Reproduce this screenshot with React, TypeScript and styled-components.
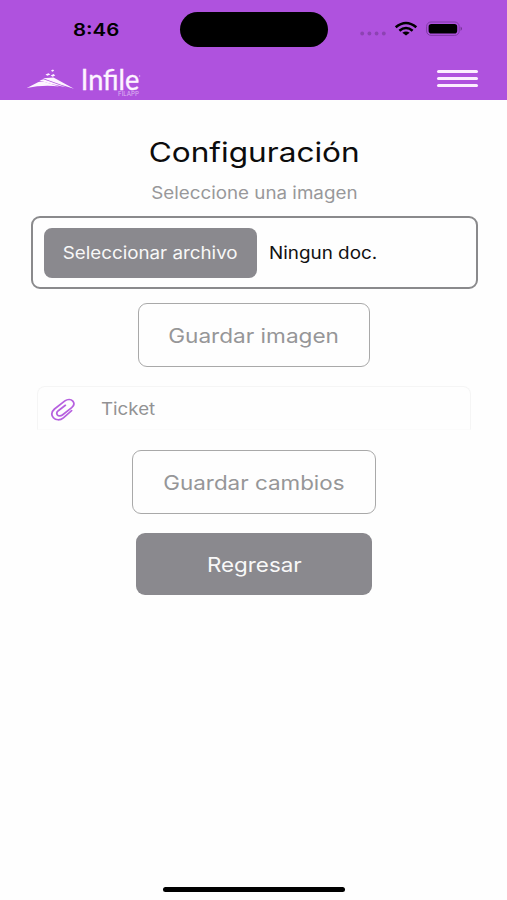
import React from "react";
import styled, { createGlobalStyle } from "styled-components";

const GlobalStyle = createGlobalStyle`
  * { box-sizing: border-box; }
  body {
    margin: 0;
    background: #fefefe;
    font-family: Inter, "Liberation Sans", sans-serif;
  }
  button { font: inherit; }
`;

const Screen = styled.div`
  display: flex;
  flex-direction: column;
  width: 507px;
  height: 900px;
  background: #fefefe;
  overflow: hidden;
`;

const Header = styled.header`
  height: 100px;
  background: #af52de;
`;

const StatusBar = styled.div`
  display: grid;
  grid-template-columns: 180px 148px 1fr;
  height: 59px;
  padding-top: 12px;
`;

const Island = styled.div`
  height: 35px;
  border-radius: 18px;
  background: #000;
`;

const Clock = styled.div`
  padding: 1px 0 0 73px;
  height: 35px;
  display: flex;
  align-items: center;
`;

const StatusIcons = styled.div`
  padding-left: 30px;
  height: 35px;
`;

const NavBar = styled.div`
  display: flex;
  justify-content: space-between;
  height: 41px;
  padding: 8px 29px 0 26px;
`;

const Brand = styled.div`
  display: flex;
`;

const MenuButton = styled.button`
  display: flex;
  flex-direction: column;
  gap: 4px;
  width: 41px;
  height: 24px;
  padding: 2.5px 0 0;
  border: 0;
  background: none;
`;

const MenuLine = styled.span`
  height: 3px;
  border-radius: 2px;
  background: #fbeeff;
`;

const Wide = styled.span<{ $size: number; $x: number; $weight?: number; $origin?: string }>`
  display: inline-block;
  white-space: nowrap;
  line-height: 1.2;
  font-size: ${(p) => p.$size}px;
  font-weight: ${(p) => p.$weight ?? 400};
  transform: scaleX(${(p) => p.$x});
  transform-origin: ${(p) => p.$origin ?? "center"};
`;

const Content = styled.main`
  flex: 1;
  display: flex;
  flex-direction: column;
  align-items: center;
  padding-left: 1px;
`;

const Title = styled.h1`
  display: flex;
  margin: 36px 0 0;
  height: 34px;
  align-items: center;
  color: #0c0c0c;
`;

const Subtitle = styled.p`
  display: flex;
  align-items: center;
  margin: 12px 0 0;
  height: 22px;
  color: #98989a;
`;

const FilePicker = styled.div`
  display: flex;
  align-items: center;
  width: 447px;
  height: 73px;
  margin-top: 12px;
  padding-left: 11px;
  border: 2px solid #8a8a8c;
  border-radius: 9px;
  color: #111;
`;

const FileButton = styled.button`
  display: flex;
  align-items: center;
  justify-content: center;
  width: 213px;
  height: 50px;
  margin-right: 12px;
  padding: 1px 0 0 1px;
  border: 0;
  border-radius: 8px;
  background: #8a898e;
  color: #f8f8f8;
`;

const FileName = styled.span`
  padding-top: 1px;
`;

const ActionButton = styled.button<{ $width: number; $height: number; $top: number; $filled?: boolean }>`
  display: flex;
  align-items: center;
  justify-content: center;
  width: ${(p) => p.$width}px;
  height: ${(p) => p.$height}px;
  margin-top: ${(p) => p.$top}px;
  padding: 2px 0 0;
  border: ${(p) => (p.$filled ? "0" : "1.5px solid #a9a9a9")};
  border-radius: 9px;
  background: ${(p) => (p.$filled ? "#8a898e" : "#fefefe")};
  color: ${(p) => (p.$filled ? "#f8f8f8" : "#969698")};
`;

const TicketRow = styled.div`
  display: flex;
  align-items: center;
  width: 434px;
  height: 44px;
  margin-top: 19px;
  padding: 3px 0 0 12px;
  border: 1px solid #f5f5f5;
  border-bottom-color: #fbfbfb;
  border-radius: 8px 8px 0 0;
  color: #929294;
`;

const ClipIcon = styled.svg`
  margin-right: 25px;
`;

const HomeIndicator = styled.div`
  width: 182px;
  height: 5px;
  margin: auto 0 8px;
  border-radius: 3px;
  background: #000;
`;

const LogoSvg = styled.svg`
  overflow: visible;
`;

function StatusGlyphs() {
  return (
    <svg width="108" height="35" viewBox="358 12 108 35">
      <g fill="#8c43b2">
        <circle cx="362.2" cy="33.5" r="1.9" />
        <circle cx="369.4" cy="33.5" r="1.9" />
        <circle cx="376.6" cy="33.5" r="1.9" />
        <circle cx="383.8" cy="33.5" r="1.9" />
      </g>
      <g fill="none" stroke="#000" strokeWidth="2.6">
        <path d="M395.7 27.2 Q406 18.8 416.3 27.2" />
        <path d="M399.4 30.8 Q406 25.2 412.6 30.8" />
      </g>
      <path d="M402.3 32.8 Q406 30 409.7 32.8 L406 35.6 Z" fill="#000" />
      <rect x="426.6" y="22" width="32.6" height="13.4" rx="4.4" fill="none" stroke="#803ba5" />
      <rect x="428.6" y="24" width="28.6" height="9.6" rx="2.8" fill="#000" />
      <path d="M460.6 26.6 Q463.4 28.7 460.6 30.9 Z" fill="#713292" />
    </svg>
  );
}

function Logo() {
  return (
    <LogoSvg width="122" height="33" viewBox="26 67 122 33" fill="#fdf4ff">
      <path d="M26.8 88 L38 82.2 Q41 80.8 45 82 L59 86.4 Q43 84.4 26.8 88 Z" />
      <path d="M39.5 80.6 L43.5 79.2 L66 87.2 Q52 85.2 39.5 80.6 Z" />
      <path d="M43 78.2 L53.5 77.6 L74 88.8 L61 84.8 Z" />
      <path d="M45.5 74.6 l3-1.3 l1.8 1.3 l-3 1.2z M51 70.4 l2-0.8 l1.2 1.1 l-2 1z M50.6 75.4 l3-1.3 l1.6 1.5 l-2.6 1.1z" />
      <text x="80.8" y="89.8" fontSize="28" fontWeight="400" stroke="#fdf4ff" strokeWidth="0.35" fontFamily="Lato, sans-serif" textLength="58.5" lengthAdjust="spacingAndGlyphs">Infile</text>
      <text x="118" y="96" fontSize="5.6" fillOpacity="0.62" fontFamily="Inter, sans-serif" textLength="21" lengthAdjust="spacingAndGlyphs">FILAPP</text>
      <circle cx="139.6" cy="76" r="0.7" fillOpacity="0.6" />
    </LogoSvg>
  );
}

export default function App() {
  return (
    <Screen>
      <GlobalStyle />
      <Header>
        <StatusBar>
          <Clock>
            <Wide $size={17} $x={1.2} $weight={600} $origin="left">8:46</Wide>
          </Clock>
          <Island />
          <StatusIcons>
            <StatusGlyphs />
          </StatusIcons>
        </StatusBar>
        <NavBar>
          <Brand>
            <Logo />
          </Brand>
          <MenuButton aria-label="Menú">
            <MenuLine />
            <MenuLine />
            <MenuLine />
          </MenuButton>
        </NavBar>
      </Header>
      <Content>
        <Title>
          <Wide $size={27} $x={1.17}>Configuración</Wide>
        </Title>
        <Subtitle>
          <Wide $size={17} $x={1.105}>Seleccione una imagen</Wide>
        </Subtitle>
        <FilePicker>
          <FileButton>
            <Wide $size={17} $x={1.105}>Seleccionar archivo</Wide>
          </FileButton>
          <FileName>
            <Wide $size={17} $x={1.11} $origin="left">Ningun doc.</Wide>
          </FileName>
        </FilePicker>
        <ActionButton $width={232} $height={64} $top={14}>
          <Wide $size={20} $x={1.13}>Guardar imagen</Wide>
        </ActionButton>
        <TicketRow>
          <ClipIcon width="26" height="24" viewBox="50 397 26 24" fill="none" stroke="#b660df" strokeWidth="1.7" strokeLinecap="round" strokeLinejoin="round">
            <path d="M71.6 409.6 L63.4 416.8 C60.2 419.5 55.7 419.4 53.4 416.7 C51.1 414 51.6 410.6 54.5 408 L64.9 399.9 C67.4 398 71.1 398 72.8 400.1 C74.6 402.3 74 404.8 71.7 406.7 L62.4 414 C60.8 415.3 58.4 415.2 57.4 413.9 C56.3 412.5 56.7 411 58.3 409.7 L65.4 404.3" />
          </ClipIcon>
          <Wide $size={17} $x={1.1} $origin="left">Ticket</Wide>
        </TicketRow>
        <ActionButton $width={244} $height={64} $top={20}>
          <Wide $size={20} $x={1.12}>Guardar cambios</Wide>
        </ActionButton>
        <ActionButton $width={236} $height={62} $top={19} $filled>
          <Wide $size={20} $x={1.12}>Regresar</Wide>
        </ActionButton>
        <HomeIndicator />
      </Content>
    </Screen>
  );
}
